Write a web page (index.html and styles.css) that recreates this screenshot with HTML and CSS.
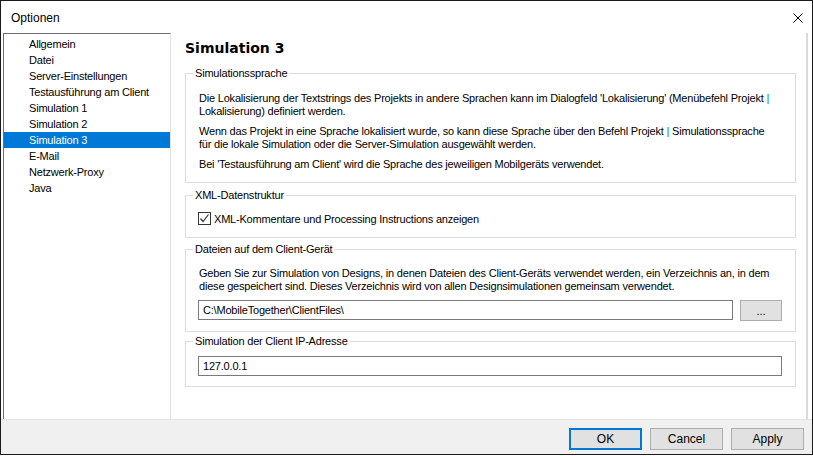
FILE: index.html
```html
<!DOCTYPE html>
<html lang="de">
<head>
    <meta charset="UTF-8">
    <title>Optionen</title>
    <link rel="stylesheet" href="styles.css">
</head>
<body>

    <div class="dialog">
        <div class="titlebar">
            <span class="title">Optionen</span>
            <svg class="close" width="10" height="10" viewBox="0 0 10 10">
                <path d="M0.5 0.5 L9.5 9.5 M9.5 0.5 L0.5 9.5" stroke="#000" stroke-width="1" fill="none"/>
            </svg>
        </div>

        <div class="main">
            <ul class="nav">
                <li>Allgemein</li>
                <li>Datei</li>
                <li>Server-Einstellungen</li>
                <li>Testausführung am Client</li>
                <li>Simulation 1</li>
                <li>Simulation 2</li>
                <li class="selected">Simulation 3</li>
                <li>E-Mail</li>
                <li>Netzwerk-Proxy</li>
                <li>Java</li>
            </ul>

            <div class="content">
                <h1>Simulation 3</h1>

                <fieldset class="group group-lang">
                    <legend>Simulationssprache</legend>
                    <p>Die Lokalisierung der Textstrings des Projekts in andere Sprachen kann im Dialogfeld 'Lokalisierung' (Menübefehl Projekt <span class="pipe">|</span><br>Lokalisierung) definiert werden.</p>
                    <p>Wenn das Projekt in eine Sprache lokalisiert wurde, so kann diese Sprache über den Befehl Projekt <span class="pipe">|</span> Simulationssprache<br>für die lokale Simulation oder die Server-Simulation ausgewählt werden.</p>
                    <p>Bei 'Testausführung am Client' wird die Sprache des jeweiligen Mobilgeräts verwendet.</p>
                </fieldset>

                <fieldset class="group group-xml">
                    <legend>XML-Datenstruktur</legend>
                    <label class="check">
                        <span class="box">
                            <svg width="11" height="11" viewBox="0 0 11 11">
                                <path d="M1.5 5.5 L4 8.5 L9.5 1.5" stroke="#333" stroke-width="1.2" fill="none"/>
                            </svg>
                        </span>
                        XML-Kommentare und Processing Instructions anzeigen
                    </label>
                </fieldset>

                <fieldset class="group group-files">
                    <legend>Dateien auf dem Client-Gerät</legend>
                    <p>Geben Sie zur Simulation von Designs, in denen Dateien des Client-Geräts verwendet werden, ein Verzeichnis an, in dem<br>diese gespeichert sind. Dieses Verzeichnis wird von allen Designsimulationen gemeinsam verwendet.</p>
                    <div class="path-row">
                        <input class="field" type="text" value="C:\MobileTogether\ClientFiles\">
                        <button class="browse">...</button>
                    </div>
                </fieldset>

                <fieldset class="group group-ip">
                    <legend>Simulation der Client IP-Adresse</legend>
                    <input class="field" type="text" value="127.0.0.1">
                </fieldset>
            </div>
        </div>

        <div class="footer">
            <button class="btn default">OK</button>
            <button class="btn">Cancel</button>
            <button class="btn">Apply</button>
        </div>
    </div>

</body>
</html>
```

FILE: styles.css
```css
body {
    margin: 0;
    background-color: #fff;
    font-family: "Liberation Sans", Arial, sans-serif;
    font-size: 11px;
    color: #000;
}
.dialog {
    width: 813px;
    height: 455px;
    box-sizing: border-box;
    border: 1px solid #1a1a1a;
    display: flex;
    flex-direction: column;
}
.titlebar {
    height: 32px;
    display: flex;
    align-items: center;
    justify-content: space-between;
    padding: 1px 9px 0 10px;
    box-sizing: border-box;
    flex-shrink: 0;
}
.title {
    font-size: 12px;
}
.main {
    height: 386px;
    display: flex;
    padding: 0 4px 0 2px;
    flex-shrink: 0;
}
.nav {
    width: 168px;
    box-sizing: border-box;
    margin: 0;
    padding: 2px 0 0 0;
    list-style: none;
    border-left: 1px solid #6d6d6d;
    border-top: 1px solid #6d6d6d;
    border-right: 1px solid #e3e3e3;
    letter-spacing: -0.2px;
}
.nav li {
    height: 16px;
    line-height: 16px;
    padding-left: 25px;
    white-space: nowrap;
}
.nav li.selected {
    background-color: #0078d7;
    color: #fff;
}
.content {
    flex: 1;
    min-width: 0;
    padding: 5px 10px 0 14px;
    border-right: 2px solid #dadada;
}
h1 {
    margin: 0 0 9px 0;
    font-family: "DejaVu Sans", Verdana, sans-serif;
    font-size: 14px;
    line-height: 20px;
    font-weight: bold;
}
.group {
    margin: 0;
    padding: 0 13px;
    border: 1px solid #dcdcdc;
    min-width: 0;
    letter-spacing: -0.2px;
}
.group legend {
    margin-left: -6px;
    padding: 0 2px;
    line-height: 13px;
}
.group p {
    margin: 0 0 7px 0;
    line-height: 13px;
    white-space: nowrap;
}
.group p:last-child {
    margin-bottom: 0;
}
.pipe {
    color: #0078d7;
}
.group-lang {
    padding-top: 12px;
    padding-bottom: 11px;
}
.group-xml {
    margin-top: 6px;
    padding-top: 10px;
    padding-bottom: 12px;
}
.group-files {
    margin-top: 5px;
    padding-top: 11px;
    padding-bottom: 10px;
}
.group-ip {
    margin-top: 3px;
    padding-top: 8px;
    padding-bottom: 10px;
}
.check {
    display: flex;
    align-items: center;
    gap: 3px;
    height: 13px;
    margin-left: -1px;
}
.box {
    width: 13px;
    height: 13px;
    box-sizing: border-box;
    border: 1px solid #333;
    display: flex;
    align-items: center;
    justify-content: center;
}
.path-row {
    display: flex;
    gap: 7px;
    margin-top: 4px;
}
.field {
    display: block;
    width: 100%;
    height: 20px;
    box-sizing: border-box;
    margin: 0 0 0 -1px;
    padding: 0 4px;
    border: 1px solid #7a7a7a;
    font-family: "Liberation Sans", Arial, sans-serif;
    font-size: 11px;
    letter-spacing: -0.2px;
    color: #000;
    outline: none;
}
.path-row .field {
    flex: 1;
    width: auto;
    min-width: 0;
}
.group-ip .field {
    width: calc(100% + 1px);
}
.browse {
    width: 42px;
    height: 21px;
    flex-shrink: 0;
    background-color: #e1e1e1;
    border: 1px solid #adadad;
    font-family: "Liberation Sans", Arial, sans-serif;
    font-size: 11px;
    padding: 0;
}
.footer {
    flex: 1;
    background-color: #f0f0f0;
    border-top: 1px solid #e3e3e3;
    display: flex;
    justify-content: flex-end;
    align-items: flex-start;
    gap: 8px;
    padding: 8px 8px 0 0;
}
.btn {
    width: 73px;
    height: 22px;
    background-color: #e1e1e1;
    border: 1px solid #adadad;
    font-family: "Liberation Sans", Arial, sans-serif;
    font-size: 12px;
    color: #000;
    padding: 0;
}
.btn.default {
    border: 2px solid #0078d7;
}
```
